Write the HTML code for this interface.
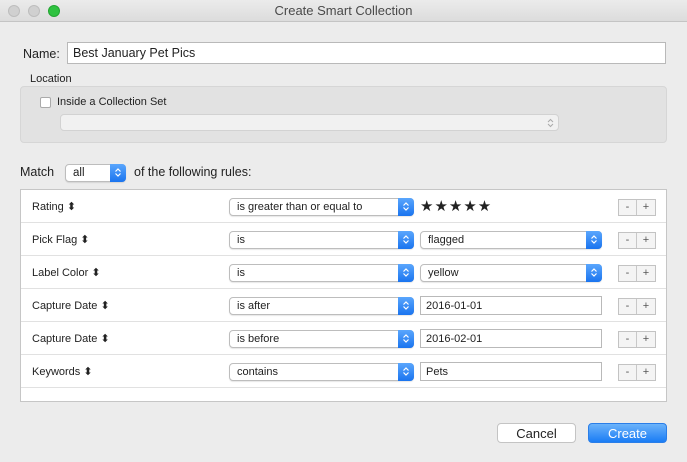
<!DOCTYPE html>
<html><head><style>
*{box-sizing:border-box;margin:0;padding:0}
body{width:687px;height:462px;background:#ececec;font-family:"Liberation Sans",sans-serif;font-size:11px;color:#222;position:relative;overflow:hidden}
.a{position:absolute}
.title{left:0;top:0;width:687px;height:22px;background:linear-gradient(#ebebeb,#dcdcdc);border-bottom:1px solid #c4c4c4;text-align:center;line-height:22px;font-size:13px;color:#4a4a4a}
.dot{width:12px;height:12px;border-radius:50%;top:5px;background:#d0d0d0;border:1px solid #bdbdbd}
.field{background:#fff;border:1px solid #b9b9b9;padding-left:5px;line-height:18px;font-size:11.5px}
.sel{background:#fff;border:1px solid #bdbdbd;border-radius:4px;padding-left:7px;line-height:16px;font-size:11px;box-shadow:0 1px 1px rgba(0,0,0,.1)}
.sel .ar{position:absolute;right:-1px;top:-1px;bottom:-1px;width:16px;background:linear-gradient(#5aa6fd,#1a74ef);border-radius:0 4px 4px 0}
.sel .ar svg{position:absolute;left:4px;top:3px}
.row{left:21px;width:645px;height:33px;border-bottom:1px solid #e1e1e1}
.lbl{left:11px;top:10px;font-size:11px}
.pm{width:38px;height:17px;border:1px solid #c3c3c3;background:#f4f4f4;font-size:11px;color:#555}
.pm span{display:inline-block;width:18px;text-align:center;line-height:15px}
.pm span:first-child{border-right:1px solid #c8c8c8}
.btn{height:20px;border-radius:4px;text-align:center;line-height:19px;font-size:13px}
</style></head><body>
<div class="a title">Create Smart Collection</div>
<div class="a dot" style="left:8px"></div>
<div class="a dot" style="left:28px"></div>
<div class="a dot" style="left:48px;background:#2fc240;border-color:#23a532"></div>

<div class="a" style="left:23px;top:47px;font-size:12.5px">Name:</div>
<div class="a field" style="left:67px;top:42px;width:599px;height:22px;line-height:21px;font-size:12.5px">Best January Pet Pics</div>
<div class="a" style="left:30px;top:73px;font-size:11px">Location</div>
<div class="a" style="left:20px;top:86px;width:647px;height:57px;background:#e2e2e2;border:1px solid #d6d6d6;border-radius:4px"></div>
<div class="a" style="left:40px;top:97px;width:11px;height:11px;background:#fff;border:1px solid #aaa;border-radius:2px"></div>
<div class="a" style="left:57px;top:96px;font-size:11px">Inside a Collection Set</div>
<div class="a" style="left:60px;top:114px;width:499px;height:17px;background:#f1f1f1;border:1px solid #d2d2d2;border-radius:4px"><svg class="a" style="right:4px;top:3px" width="7" height="10"><path d="M1 4L3.5 1.5L6 4M1 6L3.5 8.5L6 6" fill="none" stroke="#aaa" stroke-width="1"/></svg></div>

<div class="a" style="left:20px;top:165px;font-size:12.5px">Match</div>
<div class="a sel" style="left:65px;top:164px;width:61px;height:18px;font-size:11.5px">all<div class="ar"><svg width="8" height="11"><path d="M1.5 4.5L4 2L6.5 4.5M1.5 6.5L4 9L6.5 6.5" fill="none" stroke="#fff" stroke-width="1.2"/></svg></div></div>
<div class="a" style="left:134px;top:165px;font-size:12.5px">of the following rules:</div>

<div class="a" style="left:20px;top:189px;width:647px;height:213px;background:#fff;border:1px solid #c6c6c6"></div>

<div class="a row" style="top:190px"><div class="a lbl">Rating ⬍</div></div>
<div class="a row" style="top:223px"><div class="a lbl">Pick Flag ⬍</div></div>
<div class="a row" style="top:256px"><div class="a lbl">Label Color ⬍</div></div>
<div class="a row" style="top:289px"><div class="a lbl">Capture Date ⬍</div></div>
<div class="a row" style="top:322px"><div class="a lbl">Capture Date ⬍</div></div>
<div class="a row" style="top:355px"><div class="a lbl">Keywords ⬍</div></div>

<div class="a sel" style="left:229px;top:198px;width:185px;height:18px">is greater than or equal to<div class="ar"><svg width="8" height="11"><path d="M1.5 4.5L4 2L6.5 4.5M1.5 6.5L4 9L6.5 6.5" fill="none" stroke="#fff" stroke-width="1.2"/></svg></div></div>
<div class="a" style="left:420px;top:197px;font-size:15px;letter-spacing:1px">★★★★★</div>
<div class="a sel" style="left:229px;top:231px;width:185px;height:18px">is<div class="ar"><svg width="8" height="11"><path d="M1.5 4.5L4 2L6.5 4.5M1.5 6.5L4 9L6.5 6.5" fill="none" stroke="#fff" stroke-width="1.2"/></svg></div></div>
<div class="a sel" style="left:420px;top:231px;width:182px;height:18px">flagged<div class="ar"><svg width="8" height="11"><path d="M1.5 4.5L4 2L6.5 4.5M1.5 6.5L4 9L6.5 6.5" fill="none" stroke="#fff" stroke-width="1.2"/></svg></div></div>
<div class="a sel" style="left:229px;top:264px;width:185px;height:18px">is<div class="ar"><svg width="8" height="11"><path d="M1.5 4.5L4 2L6.5 4.5M1.5 6.5L4 9L6.5 6.5" fill="none" stroke="#fff" stroke-width="1.2"/></svg></div></div>
<div class="a sel" style="left:420px;top:264px;width:182px;height:18px">yellow<div class="ar"><svg width="8" height="11"><path d="M1.5 4.5L4 2L6.5 4.5M1.5 6.5L4 9L6.5 6.5" fill="none" stroke="#fff" stroke-width="1.2"/></svg></div></div>
<div class="a sel" style="left:229px;top:297px;width:185px;height:18px">is after<div class="ar"><svg width="8" height="11"><path d="M1.5 4.5L4 2L6.5 4.5M1.5 6.5L4 9L6.5 6.5" fill="none" stroke="#fff" stroke-width="1.2"/></svg></div></div>
<div class="a field" style="left:420px;top:296px;width:182px;height:19px;font-size:11px">2016-01-01</div>
<div class="a sel" style="left:229px;top:330px;width:185px;height:18px">is before<div class="ar"><svg width="8" height="11"><path d="M1.5 4.5L4 2L6.5 4.5M1.5 6.5L4 9L6.5 6.5" fill="none" stroke="#fff" stroke-width="1.2"/></svg></div></div>
<div class="a field" style="left:420px;top:329px;width:182px;height:19px;font-size:11px">2016-02-01</div>
<div class="a sel" style="left:229px;top:363px;width:185px;height:18px">contains<div class="ar"><svg width="8" height="11"><path d="M1.5 4.5L4 2L6.5 4.5M1.5 6.5L4 9L6.5 6.5" fill="none" stroke="#fff" stroke-width="1.2"/></svg></div></div>
<div class="a field" style="left:420px;top:362px;width:182px;height:19px;font-size:11px">Pets</div>

<div class="a pm" style="left:618px;top:199px"><span>-</span><span>+</span></div>
<div class="a pm" style="left:618px;top:232px"><span>-</span><span>+</span></div>
<div class="a pm" style="left:618px;top:265px"><span>-</span><span>+</span></div>
<div class="a pm" style="left:618px;top:298px"><span>-</span><span>+</span></div>
<div class="a pm" style="left:618px;top:331px"><span>-</span><span>+</span></div>
<div class="a pm" style="left:618px;top:364px"><span>-</span><span>+</span></div>

<div class="a btn" style="left:497px;top:423px;width:79px;background:#fff;border:1px solid #c4c4c4">Cancel</div>
<div class="a btn" style="left:588px;top:423px;width:79px;background:linear-gradient(#6cb3fa,#1a7cf5);color:#fff;border:1px solid #2a7ee8">Create</div>
</body></html>
